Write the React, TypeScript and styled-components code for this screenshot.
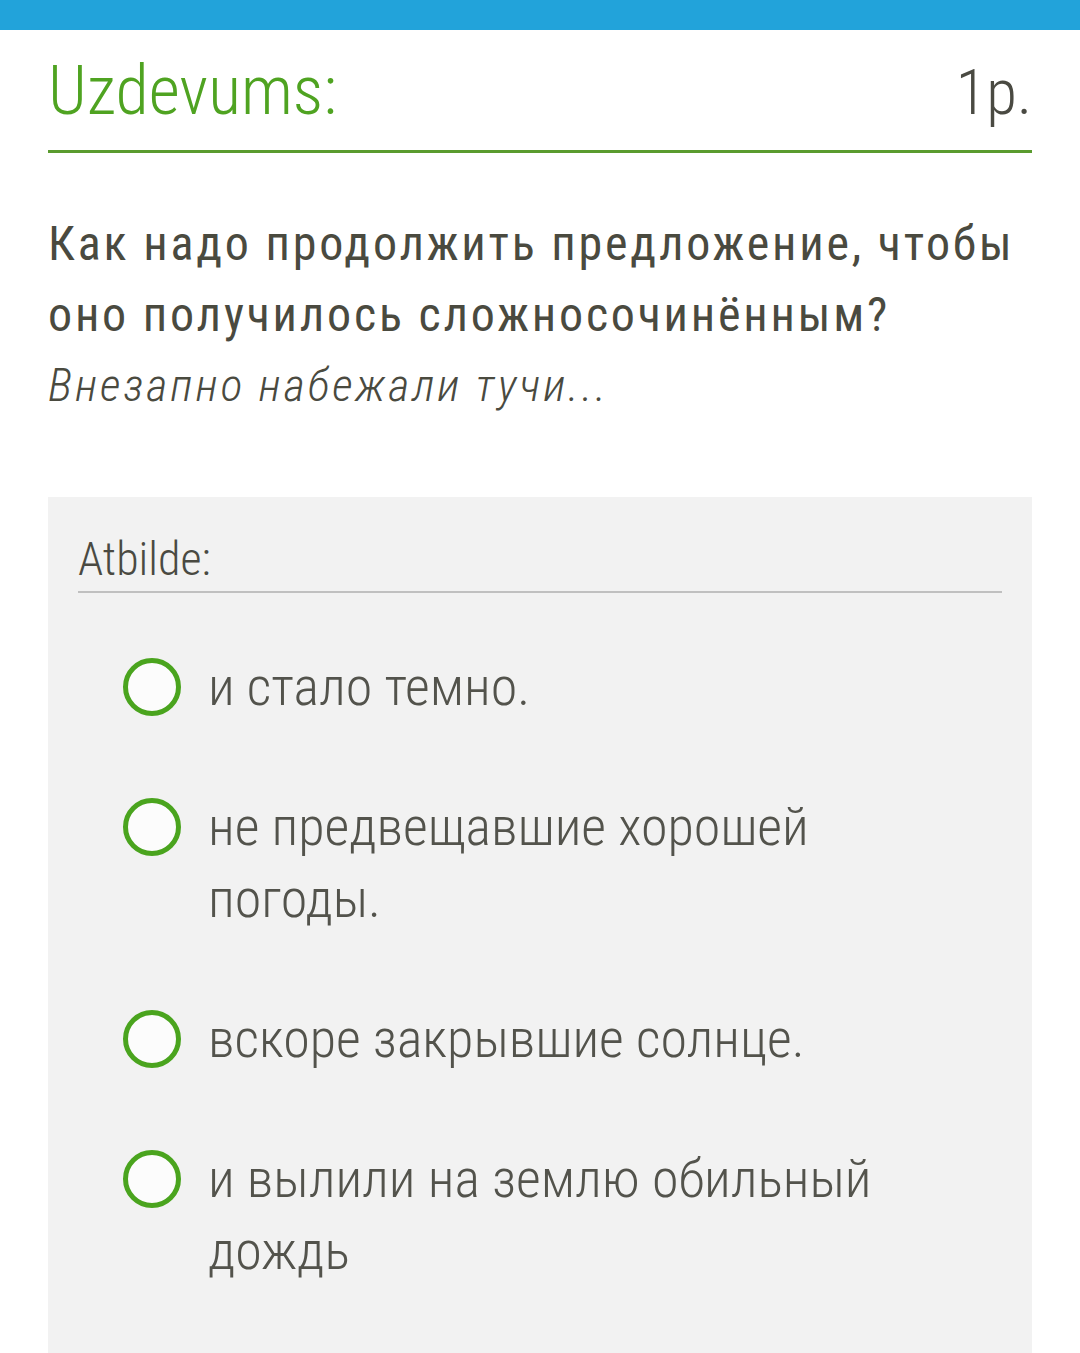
import React from "react";
import styled, { createGlobalStyle } from "styled-components";

const GlobalStyle = createGlobalStyle`
  html, body {
    margin: 0;
    padding: 0;
    background: #fff;
  }
  body {
    font-family: "Roboto Condensed", Roboto, "Liberation Sans", sans-serif;
  }
`;

const TopBar = styled.div`
  height: 30px;
  background: #22a3da;
`;

const Page = styled.div`
  padding: 0 48px;
`;

const Header = styled.div`
  display: flex;
  justify-content: space-between;
  align-items: baseline;
  margin-top: 21px;
  padding-bottom: 17px;
  border-bottom: 3px solid #5a9b2f;
`;

const Title = styled.span`
  font-size: 68px;
  line-height: 80px;
  font-weight: 300;
  color: #4fa321;
`;

const Points = styled.span`
  font-size: 63px;
  line-height: 80px;
  font-weight: 300;
  color: #4a4a42;
`;

const Question = styled.div`
  margin-top: 55px;
  font-size: 48px;
  line-height: 71px;
  letter-spacing: 2.8px;
  color: #4a4a3f;
`;

const Hint = styled.div`
  font-size: 46px;
  font-style: italic;
  font-weight: 300;
  letter-spacing: 3px;
`;

const AnswerPanel = styled.div`
  margin-top: 76px;
  background: #f2f2f2;
  padding: 34px 30px 80px;
  min-height: 760px;
`;

const AnswerLabel = styled.div`
  font-size: 46px;
  line-height: 56px;
  font-weight: 300;
  color: #4a4a42;
  padding-bottom: 4px;
  border-bottom: 2px solid #c0c0c0;
`;

const Options = styled.div`
  display: flex;
  flex-direction: column;
  gap: 68px;
  margin-top: 58px;
  padding-left: 45px;
`;

const Option = styled.label`
  display: flex;
  align-items: flex-start;
  gap: 27px;
`;

const Radio = styled.span`
  flex: none;
  box-sizing: border-box;
  width: 58px;
  height: 58px;
  margin-top: 7px;
  border-radius: 50%;
  border: 5px solid #4aa41e;
  background: #fcfcfc;
`;

const OptionText = styled.span`
  font-size: 54px;
  line-height: 72px;
  font-weight: 300;
  color: #53534c;
  max-width: 720px;
`;

const answers = [
  "и стало темно.",
  "не предвещавшие хорошей погоды.",
  "вскоре закрывшие солнце.",
  "и вылили на землю обильный дождь",
];

export default function App() {
  return (
    <>
      <GlobalStyle />
      <TopBar />
      <Page>
        <Header>
          <Title>Uzdevums:</Title>
          <Points>1р.</Points>
        </Header>
        <Question>
          Как надо продолжить предложение, чтобы оно получилось сложносочинённым?
          <Hint>Внезапно набежали тучи...</Hint>
        </Question>
        <AnswerPanel>
          <AnswerLabel>Atbilde:</AnswerLabel>
          <Options>
            {answers.map((a) => (
              <Option key={a}>
                <Radio />
                <OptionText>{a}</OptionText>
              </Option>
            ))}
          </Options>
        </AnswerPanel>
      </Page>
    </>
  );
}
